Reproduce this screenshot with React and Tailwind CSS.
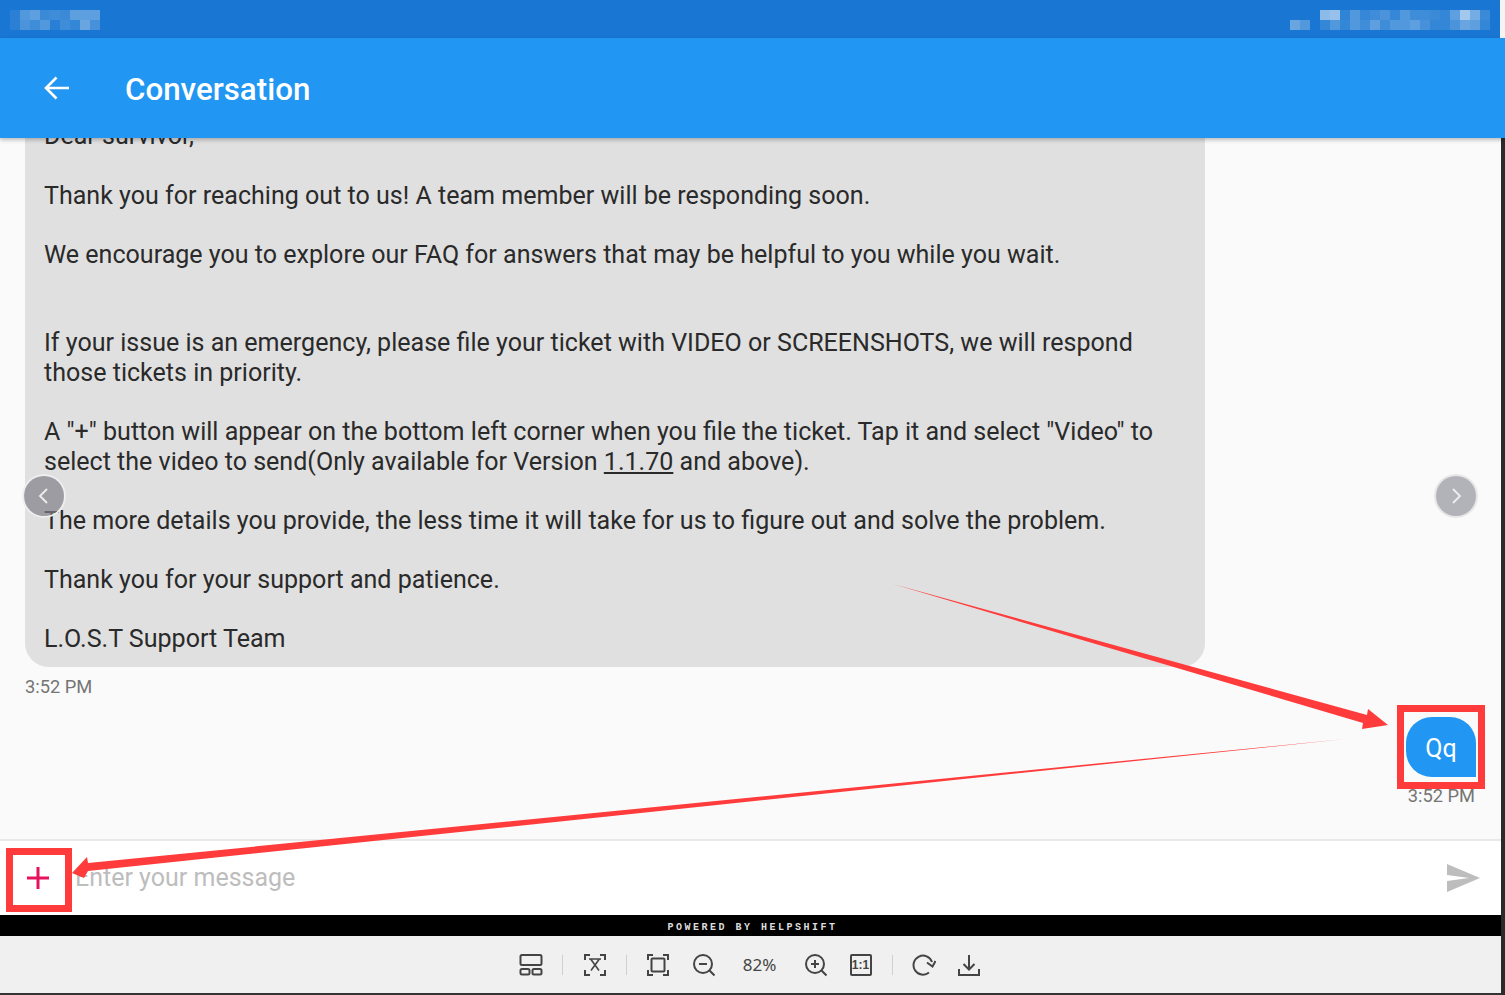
import React from "react";

// blurred out bits in the status bar, one value per 10px cell
const mosaicLeft = [
  [0.08, 0.25, 0.3, 0.15, 0.17, 0.15, 0.3, 0.3, 0.3],
  [0.08, 0.22, 0.17, 0.25, 0.07, 0.17, 0.12, 0.35, 0.2],
];
const mosaicRight = [
  [0, 0, 0, 0.5, 0.55, 0.1, 0.25, 0.13, 0.17, 0.22, 0.13, 0.25, 0.17, 0.17, 0.15, 0.12, 0.3, 0.6, 0.4, 0.15],
  [0.35, 0.25, 0, 0.12, 0.25, 0.12, 0.25, 0.17, 0.3, 0.17, 0.25, 0.25, 0.3, 0.2, 0.12, 0.12, 0.22, 0.35, 0.3, 0.12],
];

function Mosaic({ rows }) {
  return (
    <div className="flex flex-col">
      {rows.map((row, i) => (
        <div key={i} className="flex">
          {row.map((a, j) => (
            <div key={j} className="w-[10px] h-[10px] bg-white" style={{ opacity: a }} />
          ))}
        </div>
      ))}
    </div>
  );
}

function Line({ children }) {
  return <p className="h-[29.6px] whitespace-nowrap">{children}</p>;
}

function Toolbar() {
  const icon = "w-[24px] h-[24px] text-[#444444]";
  return (
    <div className="h-[57px] bg-[#f0f0f0] flex items-center justify-center pr-[6px] shrink-0">
      <svg viewBox="0 0 24 24" className={icon} fill="none" stroke="currentColor" strokeWidth="2">
        <rect x="1.5" y="2" width="21" height="10" rx="1.5" />
        <rect x="1.5" y="16" width="9" height="5.5" rx="1.5" />
        <rect x="13.5" y="16" width="9" height="5.5" rx="1.5" />
      </svg>
      <div className="w-px h-[20px] bg-[#cfcfd6] ml-[19px] mr-[20px]" />
      <svg viewBox="0 0 24 24" className={icon} fill="none" stroke="currentColor" strokeWidth="2">
        <path d="M2 7V2h5M17 2h5v5M22 17v5h-5M7 22H2v-5" />
        <path d="M6 6h12M8 6.5l8 11M16 6.5l-8 11" strokeWidth="1.6" />
      </svg>
      <div className="w-px h-[20px] bg-[#cfcfd6] ml-[19px] mr-[19px]" />
      <svg viewBox="0 0 24 24" className={icon} fill="none" stroke="currentColor" strokeWidth="2">
        <path d="M2 7V2h5M17 2h5v5M22 17v5h-5M7 22H2v-5" />
        <rect x="5.5" y="5.5" width="13" height="13" rx="1" />
      </svg>
      <svg viewBox="0 0 24 24" className={`${icon} ml-[22px]`} fill="none" stroke="currentColor" strokeWidth="2">
        <circle cx="11" cy="11" r="9" />
        <path d="M7 11h8M17.5 17.5l5 5" />
      </svg>
      <span className="w-[88px] text-center text-[17px] text-[#444] font-['Noto_Sans',sans-serif]">82%</span>
      <svg viewBox="0 0 24 24" className={icon} fill="none" stroke="currentColor" strokeWidth="2">
        <circle cx="11" cy="11" r="9" />
        <path d="M7 11h8M11 7v8M17.5 17.5l5 5" />
      </svg>
      <div className="ml-[22px] w-[22px] h-[22px] border-2 border-[#444444] rounded-[2px] flex items-center justify-center text-[12px] leading-none text-[#444444] font-['Liberation_Sans',sans-serif] font-bold">
        1:1
      </div>
      <div className="w-px h-[20px] bg-[#cfcfd6] ml-[20px] mr-[19px]" />
      <svg viewBox="0 0 24 24" className={icon} fill="none" stroke="currentColor" strokeWidth="2">
        <path d="M17 19.5A9.5 9.5 0 1 1 20 9" />
        <path d="M15 9.5l5.5 4 3-5.5" />
      </svg>
      <svg viewBox="0 0 24 24" className={`${icon} ml-[21px]`} fill="none" stroke="currentColor" strokeWidth="2">
        <path d="M12 2v14M6.5 11l5.5 5.5 5.5-5.5" />
        <path d="M2 16v6h20v-6" />
      </svg>
    </div>
  );
}

function Annotations() {
  return (
    <svg className="absolute inset-0 pointer-events-none" width="1505" height="995" viewBox="0 0 1505 995">
      <polygon fill="#ff3b3b" points="893,584 1367,715 1368,709 1388,725 1362,729 1363,723" />
      <polygon fill="#ff3b3b" points="1345,739 88,863 87,857 72,873 84,878 88,871" />
      <rect x="1400.5" y="708.5" width="81" height="77" fill="none" stroke="#ff3b3b" strokeWidth="7" />
      <rect x="9.5" y="851.5" width="59" height="57" fill="none" stroke="#ff3b3b" strokeWidth="7" />
    </svg>
  );
}

export default function App() {
  return (
    <div className="relative w-[1505px] h-[995px] overflow-hidden bg-[#fafafa] font-['Roboto',sans-serif] flex flex-col">
      <div className="flex-1 min-h-0 flex flex-col">
        {/* status bar */}
        <div className="h-[38px] bg-[#1976d2] flex justify-between pt-[10px] pl-[10px] pr-[15px] shrink-0">
          <Mosaic rows={mosaicLeft} />
          <Mosaic rows={mosaicRight} />
        </div>

        {/* app bar */}
        <div className="relative z-10 h-[100px] bg-[#2196f3] shadow-[0_2px_4px_rgba(0,0,0,0.25)] flex items-center shrink-0 text-white">
          <svg viewBox="0 0 26 26" className="w-[26px] h-[26px] ml-[44px]" fill="none" stroke="currentColor" strokeWidth="2.6">
            <path d="M25 13H2M12.5 2.5L2 13l10.5 10.5" />
          </svg>
          <span className="ml-[55px] mt-[4px] text-[31.3px] font-medium leading-none">Conversation</span>
        </div>

        {/* messages, pinned to the bottom so the first line runs under the app bar */}
        <div className="relative flex-1 min-h-0 overflow-hidden flex flex-col justify-end">
          <div className="shrink-0 w-[1180px] ml-[25px] bg-[#e0e0e0] rounded-b-[24px] pl-[19px] pb-[13px] text-[25.05px] leading-[29.6px] text-[#2a2a2a]">
            <Line>Dear survivor,</Line>
            <Line>&nbsp;</Line>
            <Line>Thank you for reaching out to us! A team member will be responding soon.</Line>
            <Line>&nbsp;</Line>
            <Line>We encourage you to explore our FAQ for answers that may be helpful to you while you wait.</Line>
            <Line>&nbsp;</Line>
            <Line>&nbsp;</Line>
            <Line>If your issue is an emergency, please file your ticket with VIDEO or SCREENSHOTS, we will respond</Line>
            <Line>those tickets in priority.</Line>
            <Line>&nbsp;</Line>
            <Line>A "+" button will appear on the bottom left corner when you file the ticket. Tap it and select "Video" to</Line>
            <Line>select the video to send(Only available for Version <span className="underline">1.1.70</span> and above).</Line>
            <Line>&nbsp;</Line>
            <Line>The more details you provide, the less time it will take for us to figure out and solve the problem.</Line>
            <Line>&nbsp;</Line>
            <Line>Thank you for your support and patience.</Line>
            <Line>&nbsp;</Line>
            <Line>L.O.S.T Support Team</Line>
          </div>
          <div className="shrink-0 ml-[25px] mt-[9px] text-[18.3px] leading-[22px] text-[#757575]">3:52 PM</div>
          <div className="shrink-0 self-end mr-[29px] mt-[19px] w-[70px] h-[60px] pt-[4px] bg-[#2196f3] rounded-[26px] rounded-br-none flex items-center justify-center text-white text-[25px]">
            Qq
          </div>
          <div className="shrink-0 self-end mr-[30px] mt-[8px] mb-[32px] text-[18.3px] leading-[22px] text-[#757575]">3:52 PM</div>

          <button className="absolute left-[24px] top-[338px] w-[40px] h-[40px] rounded-full bg-[#7f7f88]/70 ring-2 ring-[#eeeeee] flex items-center justify-center">
            <svg viewBox="0 0 24 24" className="w-[24px] h-[24px]" fill="none" stroke="#eeeeee" strokeWidth="1.8"><path d="M15 5l-7 7 7 7" /></svg>
          </button>
          <button className="absolute left-[1436px] top-[338px] w-[40px] h-[40px] rounded-full bg-[#93939c]/70 ring-2 ring-[#e6e6e6] flex items-center justify-center">
            <svg viewBox="0 0 24 24" className="w-[24px] h-[24px]" fill="none" stroke="#eeeeee" strokeWidth="1.8"><path d="M9 5l7 7-7 7" /></svg>
          </button>
        </div>

        {/* composer */}
        <div className="h-[76px] shrink-0 bg-white border-t-2 border-[#e8e8e8] flex items-center">
          <svg viewBox="0 0 24 24" className="w-[24px] h-[24px] ml-[26px]" fill="none" stroke="#e6125d" strokeWidth="3"><path d="M12 1v22M1 12h22" /></svg>
          <span className="ml-[25px] flex-1 text-[25px] text-[#bdbdbd]">Enter your message</span>
          <svg viewBox="0 0 34 28" className="w-[34px] h-[28px] mr-[25px]" fill="#bdbdbd"><path d="M1 0l33 14L1 28v-11l22-3L1 11z" /></svg>
        </div>
      </div>

      <div className="h-[21px] bg-black shrink-0 flex items-center justify-center pt-[3px] text-[#dddddd] text-[10px] font-bold tracking-[2.5px] font-['Liberation_Mono',monospace]">
        POWERED BY HELPSHIFT
      </div>
      <Toolbar />
      <div className="h-[2px] bg-[#333] shrink-0" />

      {/* window edge */}
      <div className="absolute right-0 top-0 h-[57px] w-[5px] bg-[#f4f4f4]" />
      <div className="absolute right-0 top-[57px] bottom-0 w-[4px] bg-[#2b2b2b]" />
      <Annotations />
    </div>
  );
}
